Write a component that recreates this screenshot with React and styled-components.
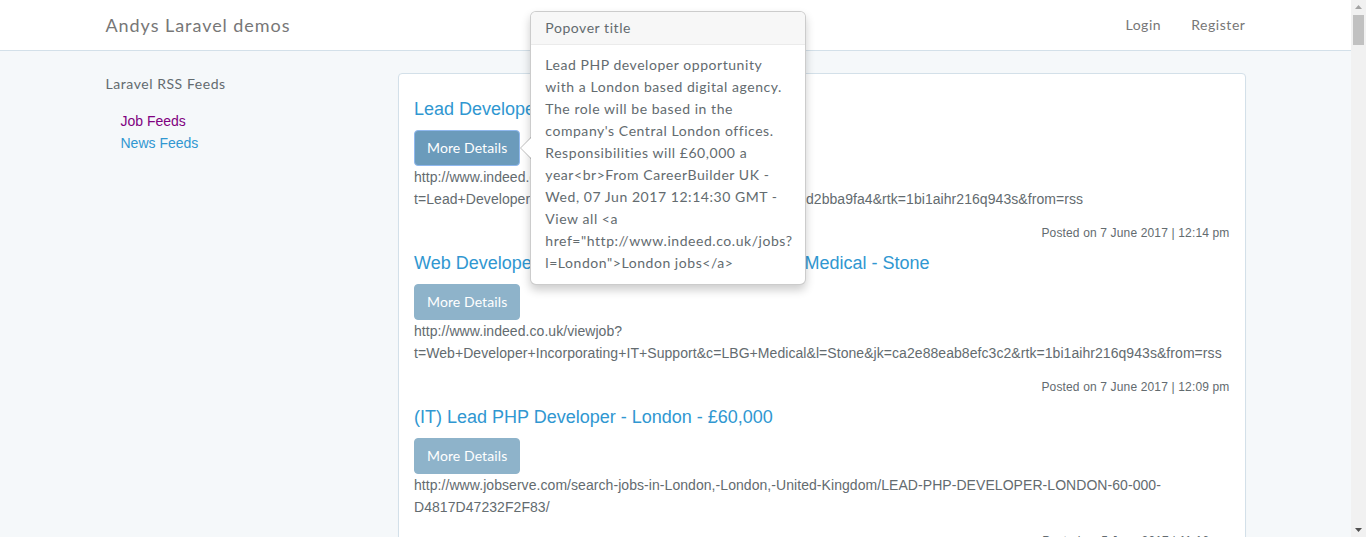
import React from 'react'
import styled, { createGlobalStyle } from 'styled-components'

const GlobalStyle = createGlobalStyle`
  body {
    margin: 0;
    background: #f5f8fa;
    font-family: Lato, "Open Sans", sans-serif;
    font-size: 14px;
    line-height: 1.6;
    color: #636b6f;
    letter-spacing: 0.55px;
  }
  * { box-sizing: border-box; }
`

// the page is laid out next to a (drawn) 15px browser scrollbar
const Page = styled.div`
  margin-right: 15px;
`

const ScrollTrack = styled.div`
  position: fixed;
  top: 0;
  right: 0;
  bottom: 0;
  width: 15px;
  background: #f1f1f1;
  display: flex;
  flex-direction: column;
  align-items: center;
  justify-content: space-between;
  padding: 5px 0;
`

const ScrollThumb = styled.div`
  position: absolute;
  top: 15px;
  left: 2px;
  width: 11px;
  height: 30px;
  background: #c1c1c1;
`

const Navbar = styled.nav`
  background: #fff;
  border-bottom: 1px solid #d3e0e9;
  height: 51px;
  margin-bottom: 22px;
`

const Container = styled.div`
  width: 1170px;
  margin: 0 auto;
  padding: 0 15px;
  display: flex;
  align-items: center;
  justify-content: space-between;
`

const Brand = styled.a`
  font-size: 18px;
  line-height: 20px;
  padding: 15px 0;
  color: #777;
  text-decoration: none;
  letter-spacing: 0.95px;
`

const NavLinks = styled.div`
  display: flex;
  margin-right: -15px;
`

const NavLink = styled.a`
  padding: 15px;
  line-height: 20px;
  color: #777;
  text-decoration: none;
`

const Row = styled.div`
  width: 1170px;
  margin: 0 auto;
  display: grid;
  grid-template-columns: 292.5px 877.5px;
`

const Sidebar = styled.div`
  padding: 0 15px;
`

const SideTitle = styled.p`
  margin: 0 0 15px;
  line-height: 22px;
`

const FeedList = styled.ul`
  list-style: none;
  margin: 0;
  padding: 0 0 0 15px;
  font-family: "Liberation Sans", Arial, sans-serif;
  letter-spacing: 0;
`

const FeedLink = styled.a`
  display: block;
  line-height: 22px;
  color: ${p => (p.$visited ? '#800080' : '#3097d1')};
  text-decoration: none;
`

const Main = styled.div`
  padding: 0 15px;
`

const Panel = styled.div`
  background: #fff;
  border: 1px solid #d3e0e9;
  border-radius: 4px;
  box-shadow: 0 1px 1px rgba(0, 0, 0, 0.05);
  padding: 15px 15px 30px;
`

const Item = styled.div``

const ItemTitle = styled.h4`
  margin: 10px 0 11px;
  font-family: "Liberation Sans", Arial, sans-serif;
  font-size: 18px;
  font-weight: 400;
  line-height: 20px;
  letter-spacing: 0;

  a { color: #3097d1; text-decoration: none; }
`

const ButtonWrap = styled.div`
  position: relative;
  display: flex;
  width: fit-content;
`

const DetailsButton = styled.button`
  font-family: Lato, "Open Sans", sans-serif;
  font-size: 14px;
  line-height: 22px;
  letter-spacing: 0.1px;
  padding: 6px 12px;
  border-radius: 4px;
  color: #fff;
  cursor: pointer;
  background: ${p => (p.$active ? '#6b9bbb' : '#8eb3ca')};
  border: 1px solid ${p => (p.$active ? '#8fb8ee' : '#8eb3ca')};
`

const Url = styled.p`
  margin: 0 0 13px;
  font-family: "Liberation Sans", Arial, sans-serif;
  font-size: 14px;
  line-height: 22px;
  letter-spacing: 0.06px;
  color: #636b6f;
`

const Posted = styled.div`
  text-align: right;
  font-family: "Liberation Sans", Arial, sans-serif;
  font-size: 12px;
  line-height: 20px;
  letter-spacing: 0.15px;
  color: #636b6f;
`

const Popover = styled.div`
  position: absolute;
  z-index: 10;
  left: calc(100% + 10px);
  top: 50%;
  transform: translateY(-50%);
  width: 276px;
  background: #fff;
  border: 1px solid rgba(0, 0, 0, 0.2);
  border-radius: 6px;
  box-shadow: 0 5px 10px rgba(0, 0, 0, 0.2);

  &::before, &::after {
    content: '';
    position: absolute;
    top: 50%;
    border-style: solid;
    border-color: transparent;
  }
  &::before {
    left: -11px;
    margin-top: -11px;
    border-width: 11px 11px 11px 0;
    border-right-color: rgba(0, 0, 0, 0.25);
  }
  &::after {
    left: -10px;
    margin-top: -10px;
    border-width: 10px 10px 10px 0;
    border-right-color: #fff;
  }
`

const PopoverTitle = styled.h3`
  margin: 0;
  padding: 8px 14px;
  font-size: 14px;
  font-weight: 400;
  line-height: 16px;
  background: #f7f7f7;
  border-bottom: 1px solid #ebebeb;
  border-radius: 5px 5px 0 0;
`

const PopoverBody = styled.div`
  padding: 9px 14px 10px;
  line-height: 22px;
  white-space: nowrap;
`

const popoverLines = [
  'Lead PHP developer opportunity',
  'with a London based digital agency.',
  'The role will be based in the',
  "company's Central London offices.",
  'Responsibilities will £60,000 a',
  'year<br>From CareerBuilder UK -',
  'Wed, 07 Jun 2017 12:14:30 GMT -',
  'View all <a',
  'href="http://www.indeed.co.uk/jobs?',
  'l=London">London jobs</a>',
]

const jobs = [
  {
    title: 'Lead Developer - PHP - Digital Agency - London',
    url: 'http://www.indeed.co.uk/viewjob?t=Lead+Developer+PHP&c=Digital+Agency&l=London&jk=5e4d2bba9fa4&rtk=1bi1aihr216q943s&from=rss',
    posted: 'Posted on 7 June 2017 | 12:14 pm',
    popover: true,
  },
  {
    title: 'Web Developer - Incorporating IT Support - LBG Medical - Stone',
    url: 'http://www.indeed.co.uk/viewjob?t=Web+Developer+Incorporating+IT+Support&c=LBG+Medical&l=Stone&jk=ca2e88eab8efc3c2&rtk=1bi1aihr216q943s&from=rss',
    posted: 'Posted on 7 June 2017 | 12:09 pm',
  },
  {
    title: '(IT) Lead PHP Developer - London - £60,000',
    url: 'http://www.jobserve.com/search-jobs-in-London,-London,-United-Kingdom/LEAD-PHP-DEVELOPER-LONDON-60-000-D4817D47232F2F83/',
    posted: 'Posted on 5 June 2017 | 11:16 am',
  },
  {
    title: 'PHP Developer - Laravel - Central London',
    url: 'http://www.indeed.co.uk/viewjob?t=PHP+Developer+Laravel&c=Digital+Agency&l=London&jk=3a1b9c0d7e2f4a61&rtk=1bi1aihr216q943s&from=rss',
    posted: 'Posted on 5 June 2017 | 10:42 am',
  },
]

function Job({ job }) {
  return (
    <Item>
      <ItemTitle><a href="#">{job.title}</a></ItemTitle>
      <ButtonWrap>
        <DetailsButton $active={job.popover}>More Details</DetailsButton>
        {job.popover && (
          <Popover>
            <PopoverTitle>Popover title</PopoverTitle>
            <PopoverBody>
              {popoverLines.map((l, i) => <div key={i}>{l}</div>)}
            </PopoverBody>
          </Popover>
        )}
      </ButtonWrap>
      <Url>{job.url}</Url>
      <Posted>{job.posted}</Posted>
    </Item>
  )
}

function Scrollbar() {
  return (
    <ScrollTrack>
      <svg width="7" height="4" viewBox="0 0 7 4"><path d="M3.5 0L7 4H0z" fill="#a3a3a3" /></svg>
      <ScrollThumb />
      <svg width="7" height="4" viewBox="0 0 7 4"><path d="M0 0h7L3.5 4z" fill="#505050" /></svg>
    </ScrollTrack>
  )
}

export default function App() {
  return (
    <>
      <GlobalStyle />
      <Page>
        <Navbar>
          <Container>
            <Brand href="#">Andys Laravel demos</Brand>
            <NavLinks>
              <NavLink href="#">Login</NavLink>
              <NavLink href="#">Register</NavLink>
            </NavLinks>
          </Container>
        </Navbar>
        <Row>
          <Sidebar>
            <SideTitle>Laravel RSS Feeds</SideTitle>
            <FeedList>
              <li><FeedLink href="#" $visited>Job Feeds</FeedLink></li>
              <li><FeedLink href="#">News Feeds</FeedLink></li>
            </FeedList>
          </Sidebar>
          <Main>
            <Panel>
              {jobs.map((j, i) => <Job key={i} job={j} />)}
            </Panel>
          </Main>
        </Row>
      </Page>
      <Scrollbar />
    </>
  )
}
